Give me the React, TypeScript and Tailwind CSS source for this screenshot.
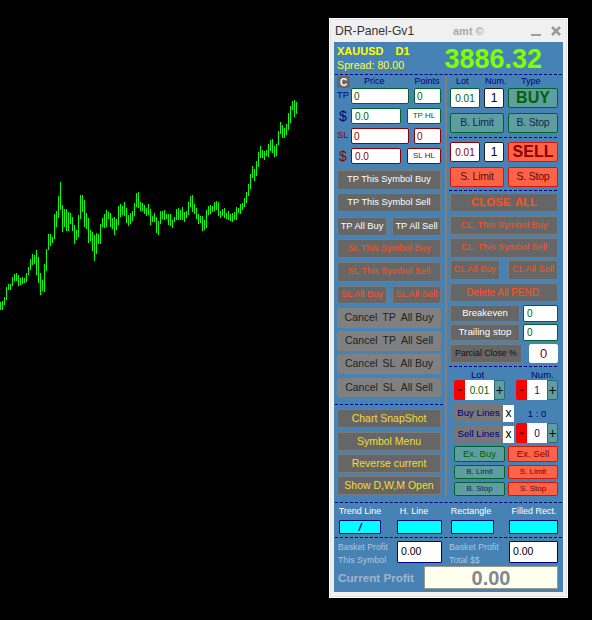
import React from "react";

const L: [number, number][] = [[636,660],[633,660],[621,645],[591,630],[582,600],[582,600],[561,588],[552,573],[549,573],[555,588],[564,585],[561,582],[564,579],[549,576],[531,555],[507,540],[492,525],[495,522],[480,555],[501,579],[549,615],[570,603],[522,606],[477,543],[432,480],[432,468],[441,459],[372,447],[363,411],[318,384],[276,360],[345,426],[357,411],[357,423],[366,423],[369,402],[381,423],[405,462],[420,450],[375,441],[315,387],[315,366],[330,411],[369,417],[384,459],[420,453],[426,483],[435,513],[429,492],[432,462],[402,462],[384,411],[372,414],[360,411],[366,387],[369,411],[384,417],[381,435],[387,420],[348,405],[342,381],[348,375],[336,378],[354,399],[375,408],[369,402],[363,393],[339,378],[309,351],[306,354],[336,363],[339,363],[345,372],[354,378],[342,375],[357,405],[378,396],[369,396],[381,429],[393,435],
[363,402],[363,387],[360,390],[372,387],[372,405],[372,408],[390,414],[381,396],[357,390],[354,390],[360,390],[351,390],[366,396],[363,384],[336,375],[318,351],[315,366],[342,372],[354,387],[372,402],[378,399],[378,423],[390,420],[360,414],[348,375],[345,372],[348,366],[336,363],[333,360],[336,378],[363,384],[357,378],[354,384],[369,387],[363,390],[372,393],[369,396],[366,390],[351,390],[354,369],[342,372],[339,360],[324,351],[306,339],[282,318],[252,297],[228,264],[237,273],[213,258],[186,231],[168,204],[180,204],[183,210],[180,198],[162,201],[150,183],[147,189],[168,201],[162,198],[123,165],[96,132],[105,144],[114,144],[102,135],[69,120],[48,99],[33,60],[30,81],[36,72]];

const d = L.map(([a, b], i) => `M${2 * i + 0.5} ${90 + a / 3}V${90 + b / 3}`).join("");

function Dash({ c = "" }: { c?: string }) {
  return <div className={"border-t border-dashed border-[#000080] " + c} />;
}

function Gb({ c = "", t, children }: { c?: string; t?: string; children: React.ReactNode }) {
  return (
    <div className={"flex items-center justify-center rounded-[2px] border border-[#7a7a7a] bg-[#666666] whitespace-nowrap " + (t || "text-white") + " " + c}>
      {children}
    </div>
  );
}

function Cb({ c = "", children }: { c?: string; children: React.ReactNode }) {
  return (
    <div className={"flex items-center justify-center rounded-[2px] border border-[#006428] bg-[#5f9ea0] whitespace-nowrap " + c}>
      {children}
    </div>
  );
}

function Rb({ c = "", children }: { c?: string; children: React.ReactNode }) {
  return (
    <div className={"flex items-center justify-center rounded-[2px] border border-[#d01808] bg-[#ff6347] whitespace-nowrap " + c}>
      {children}
    </div>
  );
}

function Inp({ c = "", children }: { c?: string; children: React.ReactNode }) {
  return <div className={"flex items-center rounded-[2px] border bg-white text-[10px] " + c}>{children}</div>;
}

function Spin({ v, c, w }: { v: string; c: string; w: string }) {
  return (
    <div className="flex h-[20px]">
      <div className="flex w-[11px] items-center justify-center rounded-l-[2px] bg-[#ff0000] text-[13px] font-bold text-[#222]">-</div>
      <div className={"flex items-center justify-center bg-white text-[10px] " + c + " " + w}>{v}</div>
      <div className="flex w-[11px] items-center justify-center rounded-r-[2px] border border-[#2a6a70] bg-[#5f9ea0] text-[14px] text-[#111]">+</div>
    </div>
  );
}

const orange = "text-[#ff5020]";
const yellow = "text-[#f5dc32]";
const navy = "text-[#12264f]";
const maroon = "text-[#5c0a0a]";
const cancel = "text-[#222222]";

export default function App() {
  return (
    <div className="relative h-[620px] w-[592px] overflow-hidden bg-black font-['Liberation_Sans',sans-serif] text-[9.3px]">
      <svg className="absolute left-0 top-0" width="320" height="320" shapeRendering="crispEdges">
        <path d={d} stroke="#00ff00" strokeWidth="1" fill="none" />
      </svg>

      <div className="absolute left-[329px] top-[18px] flex h-[580px] w-[239px] flex-col border border-white bg-[#f0f0f0] outline outline-1 -outline-offset-2 outline-[#e4e4e4]">
        <div className="relative h-[23px] shrink-0">
          <span className="absolute left-[5px] top-[4px] text-[12.2px] leading-[17px] text-[#333]">DR-Panel-Gv1</span>
          <span className="absolute left-[123px] top-[5px] text-[11px] font-bold leading-[15px] text-[#aaaaaa]">amt ©</span>
          <svg className="absolute left-[200px] top-[7px]" width="32" height="12" shapeRendering="crispEdges">
            <rect x="1" y="8" width="10" height="2" fill="#a0a0a0" />
          </svg>
          <svg className="absolute left-[221px] top-[7px]" width="10" height="10">
            <path d="M1 1L9 9M9 1L1 9" stroke="#9a9a9a" strokeWidth="2.6" />
          </svg>
        </div>

        <div className="mx-[4px] flex h-[550px] flex-col bg-[#4682b4]">
          {/* header */}
          <div className="flex h-[32px] shrink-0 items-center justify-between pl-[3px] pr-[21px]">
            <div className="flex flex-col">
              <div className="flex gap-[12px] text-[11px] font-bold leading-[14px] text-[#ffff00]">
                <span>XAUUSD</span>
                <span>D1</span>
              </div>
              <div className="text-[10.7px] leading-[14px] text-[#ffff33]">Spread: 80.00</div>
            </div>
            <div className="mt-[2px] text-[27px] font-bold leading-[30px] text-[#7fff00]">3886.32</div>
          </div>
          <Dash c="mx-[1px]" />

          <div className="flex pl-[3px]">
            {/* left column */}
            <div className="flex w-[104px] shrink-0 flex-col">
              <div className="flex h-[13px] items-center text-[9px] text-[#000080]">
                <div className="mt-[1px] flex h-[12px] w-[13px] items-center justify-center rounded-[2px] bg-[#666666] text-[10px] font-bold text-white">C</div>
                <span className="ml-[14px]">Price</span>
                <span className="ml-[30px]">Points</span>
              </div>
              <div className="flex h-[16px] items-center">
                <span className="w-[14px] text-[#000080]">TP</span>
                <Inp c="h-[16px] w-[58px] border-[#006428] pl-[2px] text-[#006400]">0</Inp>
                <Inp c="ml-[5px] h-[16px] w-[27px] border-[#006428] pl-[2px] text-[#006400]">0</Inp>
              </div>
              <div className="mt-[4px] flex h-[16px] items-center">
                <span className="w-[14px] pl-[2px] text-[14px] text-[#000080]">$</span>
                <Inp c="h-[16px] w-[50px] border-[#006428] pl-[3px] text-[#006400]">0.0</Inp>
                <div className="ml-[6px] flex h-[16px] w-[34px] items-center justify-center rounded-[2px] border border-[#006428] bg-white text-[8px] text-[#006400]">TP HL</div>
              </div>
              <div className="mt-[4px] flex h-[16px] items-center">
                <span className="w-[14px] text-[#8b0000]">SL</span>
                <Inp c="h-[16px] w-[58px] border-[#8b0000] pl-[2px] text-[#8b0000]">0</Inp>
                <Inp c="ml-[5px] h-[16px] w-[27px] border-[#8b0000] pl-[2px] text-[#8b0000]">0</Inp>
              </div>
              <div className="mt-[4px] flex h-[16px] items-center">
                <span className="w-[14px] pl-[2px] text-[14px] text-[#8b0000]">$</span>
                <Inp c="h-[16px] w-[50px] border-[#8b0000] pl-[3px] text-[#8b0000]">0.0</Inp>
                <div className="ml-[6px] flex h-[16px] w-[34px] items-center justify-center rounded-[2px] border border-[#8b0000] bg-white text-[8px] text-[#8b0000]">SL HL</div>
              </div>

              <Gb c="mt-[6px] h-[20px]">TP This Symbol Buy</Gb>
              <Gb c="mt-[3px] h-[19px]">TP This Symbol Sell</Gb>
              <div className="mt-[5px] flex h-[19px] justify-between">
                <Gb c="w-[50px]">TP All Buy</Gb>
                <Gb c="w-[49px]">TP All Sell</Gb>
              </div>
              <Gb t={orange} c="mt-[3px] h-[19px]">SL This Symbol Buy</Gb>
              <Gb t={orange} c="mt-[4px] h-[20px]">SL This Symbol Sell</Gb>
              <div className="mt-[4px] flex h-[18px] justify-between">
                <Gb t={orange} c="w-[50px]">SL All Buy</Gb>
                <Gb t={orange} c="w-[49px]">SL All Sell</Gb>
              </div>
              <Gb t={cancel} c="mt-[4px] h-[20px] gap-[5px] border-[#808080] bg-[#808080] text-[10.5px]"><span>Cancel</span><span>TP</span><span>All Buy</span></Gb>
              <Gb t={cancel} c="mt-[3px] h-[20px] gap-[5px] border-[#808080] bg-[#808080] text-[10.5px]"><span>Cancel</span><span>TP</span><span>All Sell</span></Gb>
              <Gb t={cancel} c="mt-[3px] h-[20px] gap-[5px] border-[#808080] bg-[#808080] text-[10.5px]"><span>Cancel</span><span>SL</span><span>All Buy</span></Gb>
              <Gb t={cancel} c="mt-[4px] h-[19px] gap-[5px] border-[#808080] bg-[#808080] text-[10.5px]"><span>Cancel</span><span>SL</span><span>All Sell</span></Gb>
              <Dash c="-ml-[2px] mt-[7px] w-[108px]" />
              <Gb t={yellow} c="mt-[4px] h-[19px] text-[10.5px]">Chart SnapShot</Gb>
              <Gb t={yellow} c="mt-[4px] h-[19px] text-[10.5px]">Symbol Menu</Gb>
              <Gb t={yellow} c="mt-[3px] h-[19px] text-[10.5px]">Reverse current</Gb>
              <Gb t={yellow} c="mt-[3px] h-[19px] text-[10.5px]">Show D,W,M Open</Gb>
            </div>

            {/* divider */}
            <div className="ml-[4px] mt-[1px] w-[2px] shrink-0 bg-[#808080]" />

            {/* right column */}
            <div className="ml-[3px] flex w-[108px] shrink-0 flex-col">
              <div className="relative h-[13px] text-[9px] text-[#000080]">
                <span className="absolute left-[6px] top-0 leading-[13px]">Lot</span>
                <span className="absolute left-[35px] top-0 leading-[13px]">Num.</span>
                <span className="absolute left-[71px] top-0 leading-[13px]">Type</span>
              </div>
              <div className="flex h-[20px]">
                <Inp c="w-[30px] justify-center border-[#006428] text-[10.5px] text-[#006400]">0.01</Inp>
                <Inp c="ml-[4px] w-[20px] justify-center border-[#222] text-[12px] text-[#000]">1</Inp>
                <Cb c="ml-[4px] w-[50px] text-[16px] font-bold text-[#006400]">BUY</Cb>
              </div>
              <div className="mt-[5px] flex h-[20px]">
                <Cb c={"w-[54px] text-[10.5px] tracking-[-0.2px] " + navy}>B. Limit</Cb>
                <Cb c={"ml-[4px] w-[50px] text-[10.5px] tracking-[-0.2px] " + navy}>B. Stop</Cb>
              </div>
              <Dash c="-ml-[1px] mt-[4px] w-[108px]" />
              <div className="mt-[4px] flex h-[20px]">
                <Inp c="w-[30px] justify-center border-[#8b0000] text-[10.5px] text-[#8b0000]">0.01</Inp>
                <Inp c="ml-[4px] w-[20px] justify-center border-[#222] text-[12px] text-[#000]">1</Inp>
                <Rb c="ml-[4px] w-[50px] text-[16px] font-bold text-[#8b0000]">SELL</Rb>
              </div>
              <div className="mt-[5px] flex h-[20px]">
                <Rb c={"w-[54px] text-[10.5px] tracking-[-0.2px] " + maroon}>S. Limit</Rb>
                <Rb c={"ml-[4px] w-[50px] text-[10.5px] tracking-[-0.2px] " + maroon}>S. Stop</Rb>
              </div>
              <Dash c="-ml-[1px] mt-[3px] w-[108px]" />
              <Gb t={orange} c="mt-[2px] h-[19px] w-[108px] gap-[4px] text-[11.5px] font-bold"><span>CLOSE</span><span>ALL</span></Gb>
              <Gb t={orange} c="mt-[4px] h-[19px] w-[108px]">CL. This Symbol Buy</Gb>
              <Gb t={orange} c="mt-[3px] h-[20px] w-[108px]">CL. This Symbol Sell</Gb>
              <div className="mt-[2px] flex h-[20px] w-[108px] justify-between">
                <Gb t={orange} c="w-[50px]">CL All Buy</Gb>
                <Gb t={orange} c="w-[50px]">CL All Sell</Gb>
              </div>
              <Gb t={orange} c="mt-[3px] h-[19px] w-[108px] text-[10px]">Delete All PEND.</Gb>
              <div className="mt-[3px] flex h-[17px] w-[108px] justify-between">
                <Gb c="w-[70px] text-[9.5px]">Breakeven</Gb>
                <Inp c="w-[35px] border-[#006428] pl-[3px] text-[#006400]">0</Inp>
              </div>
              <div className="mt-[2px] flex h-[17px] w-[108px] justify-between">
                <Gb c="w-[70px] text-[9.8px]">Trailing stop</Gb>
                <Inp c="w-[35px] border-[#006428] pl-[3px] text-[#006400]">0</Inp>
              </div>
              <div className="mt-[3px] flex h-[19px] w-[108px] justify-between">
                <Gb t="text-[#111]" c="w-[72px] text-[8.75px]">Parcial Close %</Gb>
                <Inp c="w-[29px] justify-center border-white text-[13px] text-[#8b0000]">0</Inp>
              </div>
              <Dash c="-ml-[1px] mt-[3px] w-[108px]" />
              <div className="relative h-[13px] text-[9.5px] text-[#000080]">
                <span className="absolute left-[21px] top-[1px] leading-[13px]">Lot</span>
                <span className="absolute left-[81px] top-[1px] leading-[13px]">Num.</span>
              </div>
              <div className="flex h-[20px] justify-between pl-[4px]">
                <Spin v="0.01" c="text-[#006400]" w="w-[29px]" />
                <div className="flex"><Spin v="1" c="text-[#4b0082]" w="w-[20px]" /></div>
              </div>
              <div className="mt-[4px] flex h-[39px]">
                <div className="ml-[4px] flex w-[60px] flex-col">
                  <div className="flex h-[18px] items-center">
                    <div className="flex h-[18px] w-[49px] items-center justify-center rounded-[2px] bg-[#777777] text-[9.7px] text-[#000080]">Buy Lines</div>
                    <div className="flex h-[17px] w-[11px] items-center justify-center bg-white text-[12px] leading-none text-black">x</div>
                  </div>
                  <div className="mt-[3px] flex h-[18px] items-center">
                    <div className="flex h-[18px] w-[49px] items-center justify-center rounded-[2px] bg-[#777777] text-[9.7px] text-[#000080]">Sell Lines</div>
                    <div className="flex h-[17px] w-[11px] items-center justify-center bg-white text-[12px] leading-none text-black">x</div>
                  </div>
                </div>
                <div className="ml-[2px] flex w-[42px] flex-col items-start">
                  <div className="h-[19px] w-full text-center text-[9.5px] leading-[19px] text-[#000080]">1 : 0</div>
                  <Spin v="0" c="text-[#000080]" w="w-[20px]" />
                </div>
              </div>
              <div className="mt-[3px] flex h-[16px] w-[108px] justify-between pl-[4px]">
                <Cb c="w-[51px] text-[9.6px] text-[#006400]">Ex. Buy</Cb>
                <Rb c="w-[50px] text-[9.6px] text-[#8b0000]">Ex. Sell</Rb>
              </div>
              <div className="mt-[3px] flex h-[14px] w-[108px] justify-between pl-[4px]">
                <Cb c={"w-[51px] text-[8px] " + navy}>B. Limit</Cb>
                <Rb c={"w-[50px] text-[8px] " + maroon}>S. Limit</Rb>
              </div>
              <div className="mt-[3px] flex h-[14px] w-[108px] justify-between pl-[4px]">
                <Cb c={"w-[51px] text-[8px] " + navy}>B. Stop</Cb>
                <Rb c={"w-[50px] text-[8px] " + maroon}>S. Stop</Rb>
              </div>
            </div>
          </div>

          <Dash c="mx-[1px] mt-[6px]" />

          {/* drawing tools */}
          <div className="mt-[2px] flex h-[14px] items-center whitespace-nowrap text-[9px] text-white">
            <span className="ml-[3px] w-[46px] text-center">Trend Line</span>
            <span className="ml-[8px] w-[46px] text-center">H. Line</span>
            <span className="ml-[11px] w-[46px] text-center">Rectangle</span>
            <span className="ml-[15px] w-[50px] text-center">Filled Rect.</span>
          </div>
          <div className="mt-[1px] flex h-[14px]">
            <div className="ml-[5px] flex w-[42px] items-center justify-center rounded-[1px] border border-[#000080] bg-[#00ffff] text-[11px] font-bold italic leading-none text-[#000080]">/</div>
            <div className="ml-[16px] w-[45px] rounded-[1px] border border-[#000080] bg-[#00ffff]" />
            <div className="ml-[9px] w-[43px] rounded-[1px] border border-[#000080] bg-[#00ffff]" />
            <div className="ml-[15px] w-[49px] rounded-[1px] border border-[#000080] bg-[#00ffff]" />
          </div>
          <Dash c="mx-[1px] mt-[3px]" />

          {/* basket */}
          <div className="mt-[3px] flex h-[22px] whitespace-nowrap">
            <div className="ml-[4px] w-[59px] text-[8.75px] leading-[13px] text-[#b0c4de]">Basket Profit<br />This Symbol</div>
            <div className="flex w-[45px] items-center rounded-[1px] border border-[#000080] bg-white pl-[3px] text-[10.5px] text-black">0.00</div>
            <div className="ml-[7px] w-[60px] text-[8.75px] leading-[13px] text-[#b0c4de]">Basket Profit<br />Total $$</div>
            <div className="flex w-[49px] items-center rounded-[1px] border border-[#000080] bg-white pl-[3px] text-[10.5px] text-black">0.00</div>
          </div>
          <div className="mt-[3px] flex h-[23px] items-center whitespace-nowrap">
            <div className="ml-[4px] w-[86px] text-[11.7px] font-bold text-[#a3b4cc]">Current Profit</div>
            <div className="flex h-[23px] w-[134px] items-center justify-center border border-[#9a9a8a] bg-[#fffff0] text-[20px] font-bold text-[#808890]">0.00</div>
          </div>
        </div>
      </div>
    </div>
  );
}
